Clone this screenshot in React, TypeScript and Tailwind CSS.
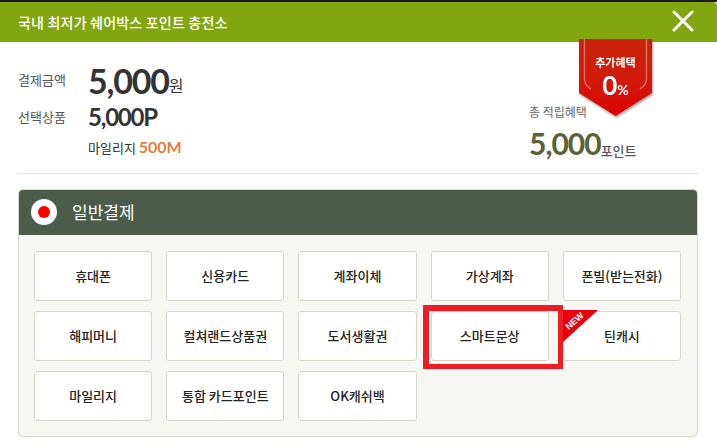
const methods = [
  '휴대폰', '신용카드', '계좌이체', '가상계좌', '폰빌(받는전화)',
  '해피머니', '컬쳐랜드상품권', '도서생활권', '스마트문상', '틴캐시',
  '마일리지', '통합 카드포인트', 'OK캐쉬백',
];

const kr = "font-['Noto_Sans_CJK_KR',sans-serif]";
const num = "font-['Lato','Noto_Sans_CJK_KR',sans-serif]";

function Ribbon() {
  return (
    <div className="absolute left-[579px] top-[39px] w-[73px] h-[77px] drop-shadow-[1px_2px_1px_rgba(0,0,0,0.35)]">
      <svg width="73" height="77" viewBox="0 0 73 77" className="absolute inset-0">
        <defs>
          <linearGradient id="rib" x1="0" y1="0" x2="0" y2="1">
            <stop offset="0" stopColor="#c8240c" />
            <stop offset="0.6" stopColor="#d3180a" />
            <stop offset="1" stopColor="#dc0000" />
          </linearGradient>
        </defs>
        <path d="M0 0H73V54L36.5 77L0 54Z" fill="url(#rib)" />
        <path d="M5.5 0V40Q5.5 46 12 50" fill="none" stroke="#fff" strokeOpacity="0.35" strokeWidth="1.5" />
        <path d="M67.5 0V40Q67.5 46 61 50" fill="none" stroke="#fff" strokeOpacity="0.35" strokeWidth="1.5" />
      </svg>
      <div className="relative flex flex-col items-center pt-[14px] text-white">
        <span className="text-[11px] leading-[18px] font-bold">추가혜택</span>
        <span className={`${num} text-[26px] leading-[30px] font-bold -mt-[1px]`}>
          0<span className="text-[14px] font-bold">%</span>
        </span>
      </div>
    </div>
  );
}

function MethodButton({ label }: { label: string }) {
  const selected = label === '스마트문상';
  const isNew = label === '틴캐시';
  return (
    <div className="relative h-[50px]">
      <button className="w-full h-full flex items-center justify-center bg-white border border-[#d5d5c8] rounded-[3px] text-[13px] font-medium text-[#222]">
        {label}
      </button>
      {selected && (
        <div className="absolute -left-[8px] -right-[14px] -top-[6px] -bottom-[8px] border-[6px] border-r-[5px] border-b-[5px] border-[#ee1c25] pointer-events-none" />
      )}
      {isNew && (
        <div className="absolute left-0 -top-[1px] w-[35px] h-[32px]">
          <svg width="35" height="32" viewBox="0 0 35 32" className="absolute inset-0">
            <path d="M0 0H35L0 32Z" fill="#e8000f" />
          </svg>
          <span className="absolute left-[1px] top-[6px] text-[9px] leading-[10px] font-bold text-white -rotate-[42deg] font-['Liberation_Sans',sans-serif]">
            NEW
          </span>
        </div>
      )}
    </div>
  );
}

export default function App() {
  return (
    <div className={`${kr} relative w-[717px] h-[447px] bg-white overflow-hidden`}>
      <div className="h-[2px] bg-[#1a1a1a]" />
      <header className="h-[40px] bg-[#84a512] rounded-tr-[4px] flex items-center justify-between pl-[18px] pr-[23px]">
        <h1 className="text-[14px] font-medium text-white tracking-[0.2px]">국내 최저가 쉐어박스 포인트 충전소</h1>
        <svg width="22" height="22" viewBox="0 0 22 22" className="mb-[2px]">
          <path d="M2 2L20 20M20 2L2 20" stroke="#fff" strokeWidth="3" strokeLinecap="round" />
        </svg>
      </header>

      <section className="mx-[18px] h-[132px] border-b border-[#e3e3e3] flex justify-between">
        <div className="pt-[19px]">
          <div className="flex items-center h-[40px]">
            <span className="w-[70px] text-[13px] text-[#555] mb-[3px]">결제금액</span>
            <span className={`${num} text-[34px] leading-[40px] font-bold text-[#333] tracking-[-1.2px]`}>5,000</span>
            <span className="text-[16px] text-[#333] mt-[8px]">원</span>
          </div>
          <div className="flex items-center h-[32px]">
            <span className="w-[70px] text-[13px] text-[#555]">선택상품</span>
            <span className={`${num} text-[24px] font-bold text-[#333] tracking-[-1.2px]`}>5,000P</span>
          </div>
          <div className="pl-[70px] mt-[3px] text-[13px] leading-[22px] text-[#333]">
            마일리지 <span className={`${num} text-[16px] font-bold text-[#e67e3a]`}>500M</span>
          </div>
        </div>
        <div className="w-[170px] pt-[60px]">
          <div className="text-[12px] leading-[20px] text-[#666]">총 적립혜택</div>
          <div className="flex items-end mt-[2px]">
            <span className={`${num} text-[30px] leading-[38px] font-bold text-[#5c6238] tracking-[-1px]`}>5,000</span>
            <span className="text-[13px] leading-[22px] text-[#555] font-medium">포인트</span>
          </div>
        </div>
      </section>

      <section className="mx-[18px] mt-[15px] w-[680px] h-[248px] rounded-[5px] border border-[#d5d5c8] bg-[#f6f6f2] overflow-hidden">
        <div className="-mx-[1px] -mt-[1px] h-[46px] bg-[#4d5b4b] flex items-center pl-[13px]">
          <span className="w-[26px] h-[26px] rounded-full bg-white flex items-center justify-center">
            <span className="w-[12px] h-[12px] rounded-full bg-[#f00]" />
          </span>
          <h2 className="ml-[15px] text-[17px] text-white">일반결제</h2>
        </div>
        <div className="grid grid-cols-5 gap-x-[14px] gap-y-[10px] pt-[16px] pl-[15px] pr-[16px]">
          {methods.map((m) => (
            <MethodButton key={m} label={m} />
          ))}
        </div>
      </section>

      <Ribbon />
    </div>
  );
}
